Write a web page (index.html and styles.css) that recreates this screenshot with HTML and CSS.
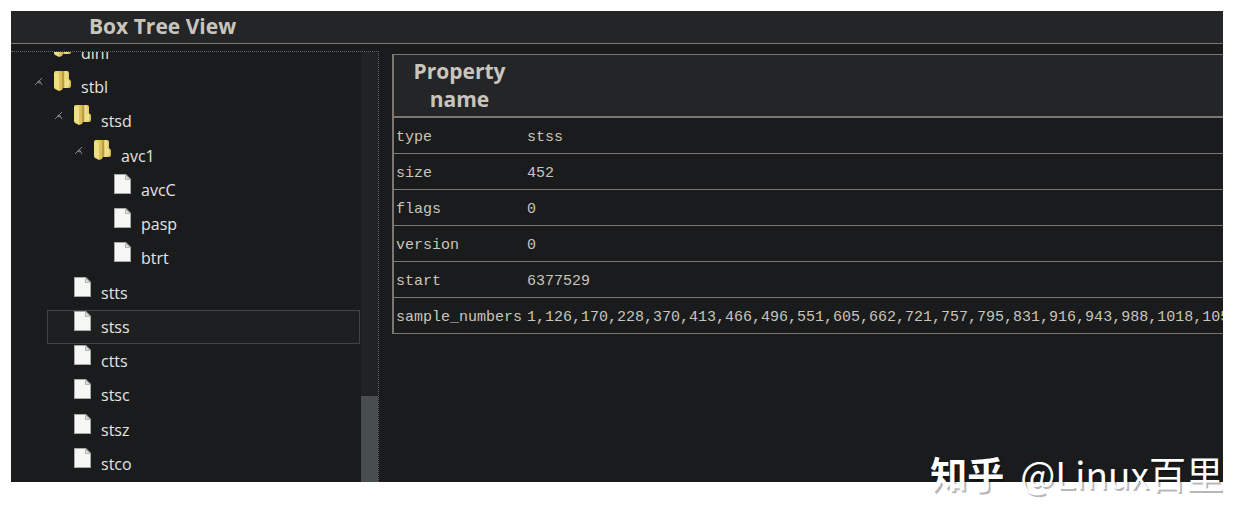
FILE: index.html
```html
<!DOCTYPE html>
<html lang="en">
<head>
<meta charset="utf-8">
<title>Box Tree View</title>
<link rel="stylesheet" href="styles.css">
</head>
<body>
<svg class="defs" aria-hidden="true">
  <defs>
    <linearGradient id="gold" x1="0" x2="1">
      <stop offset="0" stop-color="#eedd83"/><stop offset=".35" stop-color="#e3cb62"/><stop offset=".55" stop-color="#b99a3c"/><stop offset=".65" stop-color="#f3e592"/><stop offset="1" stop-color="#d5b94d"/>
    </linearGradient>
    <symbol id="folder" viewBox="0 0 17 20">
      <path d="M0 2Q0 0 2 0H13Q15 0 15 2V8L17 10V15Q17 17 15 17H9L8 19L5 20L1 18Q0 17 0 16Z" fill="url(#gold)"/>
      <path d="M1 2L5 3V19L1 17Z" fill="#efdf85"/>
      <path d="M5 3L8 1V18L5 19Z" fill="#dbc15a"/>
      <path d="M9 2V16" stroke="#b39540" fill="none"/>
      <path d="M14 9V15" stroke="#fff5b8" fill="none"/>
    </symbol>
    <symbol id="file" viewBox="0 0 17 20">
      <path d="M0 0H12L17 5V20H0Z" fill="#a5a8a5"/>
      <path d="M1 1H11L16 6V19H1Z" fill="#f6f7f4"/>
      <path d="M11 1V6H16Z" fill="#b4b7b4"/>
      <path d="M12 2V5H15Z" fill="#dcdedb"/>
    </symbol>
    <symbol id="arrow" viewBox="0 0 9 9">
      <path d="M0 8L7 1M4 3L7 8M2 5L5 6" stroke="#858887" fill="none"/>
    </symbol>
  </defs>
</svg>
<main class="viewer">
  <header class="titlebar"><h1 class="title">Box Tree View</h1></header>
  <div class="panes">
    <section class="tree-pane" aria-label="Box tree">
      <ul class="tree" role="tree">
        <li class="node level-1" role="treeitem"><svg class="arrow"><use href="#arrow"/></svg><svg class="icon"><use href="#folder"/></svg><span class="label">dinf</span></li>
        <li class="node level-1" role="treeitem"><svg class="arrow"><use href="#arrow"/></svg><svg class="icon"><use href="#folder"/></svg><span class="label">stbl</span></li>
        <li class="node level-2" role="treeitem"><svg class="arrow"><use href="#arrow"/></svg><svg class="icon"><use href="#folder"/></svg><span class="label">stsd</span></li>
        <li class="node level-3" role="treeitem"><svg class="arrow"><use href="#arrow"/></svg><svg class="icon"><use href="#folder"/></svg><span class="label">avc1</span></li>
        <li class="node leaf level-4" role="treeitem"><svg class="icon"><use href="#file"/></svg><span class="label">avcC</span></li>
        <li class="node leaf level-4" role="treeitem"><svg class="icon"><use href="#file"/></svg><span class="label">pasp</span></li>
        <li class="node leaf level-4" role="treeitem"><svg class="icon"><use href="#file"/></svg><span class="label">btrt</span></li>
        <li class="node leaf level-2" role="treeitem"><svg class="icon"><use href="#file"/></svg><span class="label">stts</span></li>
        <li class="node leaf level-2 selected" role="treeitem" aria-selected="true"><svg class="icon"><use href="#file"/></svg><span class="label">stss</span></li>
        <li class="node leaf level-2" role="treeitem"><svg class="icon"><use href="#file"/></svg><span class="label">ctts</span></li>
        <li class="node leaf level-2" role="treeitem"><svg class="icon"><use href="#file"/></svg><span class="label">stsc</span></li>
        <li class="node leaf level-2" role="treeitem"><svg class="icon"><use href="#file"/></svg><span class="label">stsz</span></li>
        <li class="node leaf level-2" role="treeitem"><svg class="icon"><use href="#file"/></svg><span class="label">stco</span></li>
      </ul>
      <div class="scroll-track"><div class="scroll-thumb"></div></div>
    </section>
    <section class="property-pane" aria-label="Properties">
      <table class="properties">
        <thead><tr><th class="name-col" scope="col">Property name</th><td></td></tr></thead>
        <tbody>
          <tr><th scope="row">type</th><td>stss</td></tr>
          <tr><th scope="row">size</th><td>452</td></tr>
          <tr><th scope="row">flags</th><td>0</td></tr>
          <tr><th scope="row">version</th><td>0</td></tr>
          <tr><th scope="row">start</th><td>6377529</td></tr>
          <tr><th scope="row">sample_numbers</th><td>1,126,170,228,370,413,466,496,551,605,662,721,757,795,831,916,943,988,1018,105</td></tr>
        </tbody>
      </table>
    </section>
  </div>
  <p class="watermark"><span class="brand">知乎</span><span class="author">@Linux百里</span></p>
</main>
</body>
</html>
```
FILE: styles.css
```css
* { box-sizing: border-box; }
body {
  margin: 0;
  padding: 11px 32px 45px 11px;
  height: 100vh;
  display: flex;
  background: #fff;
  font-family: "Open Sans", sans-serif;
}
.defs { position: absolute; width: 0; height: 0; }
.viewer {
  position: relative;
  flex: 1;
  min-width: 0;
  display: flex;
  flex-direction: column;
  background: #1a1b1c;
}
.titlebar {
  background: #242526;
  border-bottom: 1px solid #7b7770;
  padding: 0 0 1px 78px;
}
.title {
  margin: 0;
  font-size: 21px;
  line-height: 31px;
  font-weight: 700;
  color: #c9c5be;
}
.panes {
  flex: 1;
  min-height: 0;
  display: flex;
  gap: 13px;
  padding-top: 7px;
}
.tree-pane {
  flex: 0 0 368px;
  display: flex;
  overflow: hidden;
  border-top: 1px dotted #626462;
  border-right: 1px dotted #626462;
}
.tree {
  flex: 1;
  margin: -16px 1px 1px 36px;
  padding: 0;
  list-style: none;
  display: flex;
  flex-direction: column;
}
.node {
  flex: 1;
  display: flex;
  align-items: flex-start;
  border: 1px solid transparent;
  color: #e4e4e2;
}
.selected { background: #1e1f20; border-color: #414344; }
.arrow { width: 9px; height: 9px; margin: 6px 10px 0 -19px; }
.icon { width: 17px; height: 20px; margin-right: 10px; }
.label { font-size: 16px; line-height: 32px; }
.level-1 { padding-left: 6px; }
.level-2 { padding-left: 26px; }
.level-3 { padding-left: 46px; }
.level-4 { padding-left: 66px; }
.scroll-track {
  width: 17px;
  display: flex;
  flex-direction: column;
  justify-content: flex-end;
  background: #202224;
}
.scroll-thumb { height: 20%; background: #484d4d; }
.property-pane { flex: 1; min-width: 0; overflow: hidden; padding-top: 3px; }
.properties {
  width: 100%;
  border-left: 2px solid #7b7770;
  border-top: 1px solid #7b7770;
  border-spacing: 0;
  font-family: "Liberation Mono", monospace;
  font-size: 15px;
  line-height: 20px;
  color: #c9c5b9;
  white-space: nowrap;
}
.properties th, .properties td {
  padding: 10px 2px 5px;
  border-bottom: 1px solid #7b7770;
  text-align: left;
  font-weight: 400;
}
.properties th { padding-right: 3px; }
.properties thead th, .properties thead td {
  padding: 2px 2px 3px;
  border-bottom-width: 2px;
  background: #242526;
}
.properties .name-col {
  width: 131px;
  text-align: center;
  white-space: normal;
  font: 700 21px/28px "Open Sans", sans-serif;
  color: #c9c5be;
}
.watermark {
  position: absolute;
  right: 0;
  bottom: -19px;
  margin: 0;
  display: flex;
  gap: 16px;
  font: 400 37px/56px "Noto Sans CJK SC", sans-serif;
  color: #fff;
  text-shadow: 2px 2px 0 rgba(0, 0, 0, .3);
}
.brand { font-weight: 700; }
```
